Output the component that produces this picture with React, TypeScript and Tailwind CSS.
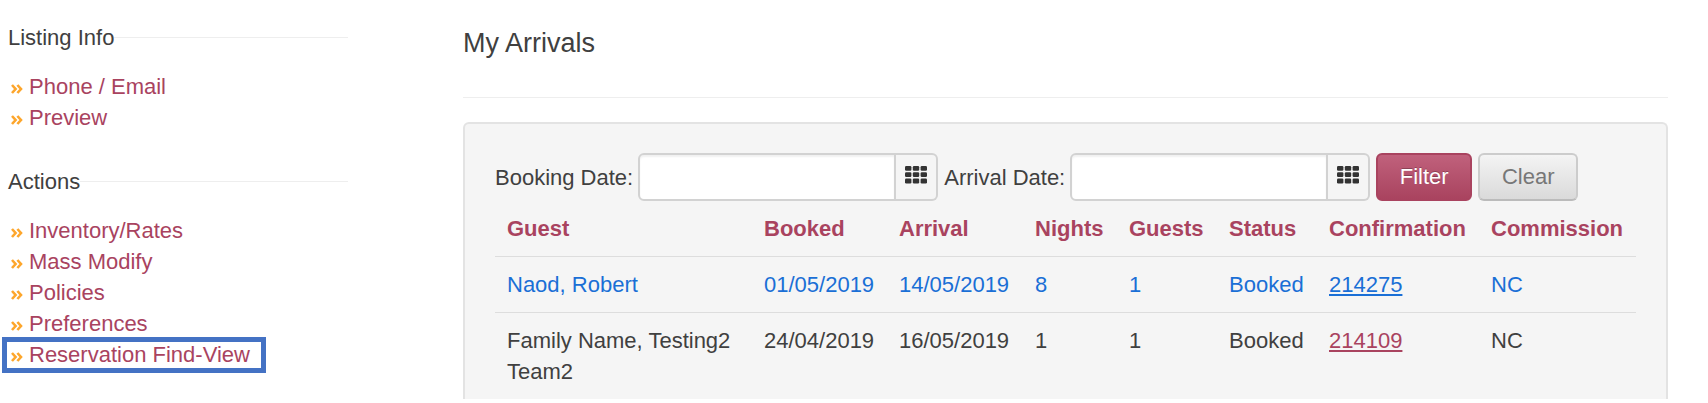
import React from "react";

const listingLinks = ["Phone / Email", "Preview"];
const actionLinks = ["Inventory/Rates", "Mass Modify", "Policies", "Preferences", "Reservation Find-View"];

type Arrival = {
  guest: string;
  booked: string;
  arrival: string;
  nights: number;
  guests: number;
  status: string;
  confirmation: string;
  commission: string;
  isNew: boolean;
};

const arrivals: Arrival[] = [
  { guest: "Naod, Robert", booked: "01/05/2019", arrival: "14/05/2019", nights: 8, guests: 1, status: "Booked", confirmation: "214275", commission: "NC", isNew: true },
  { guest: "Family Name, Testing2 Team2", booked: "24/04/2019", arrival: "16/05/2019", nights: 1, guests: 1, status: "Booked", confirmation: "214109", commission: "NC", isNew: false },
];

const columns = ["Guest", "Booked", "Arrival", "Nights", "Guests", "Status", "Confirmation", "Commission"];

function Bullet() {
  return (
    <svg className="mt-1 h-2.5 w-3 shrink-0" viewBox="0 0 12 10" fill="none" stroke="#fda62c" strokeWidth="2.6" aria-hidden="true">
      <path d="M1 1 L4.6 5 L1 9" />
      <path d="M6.4 1 L10 5 L6.4 9" />
    </svg>
  );
}

function GridIcon() {
  return (
    <svg className="h-[18px] w-[22px]" viewBox="0 0 22 18" fill="#333333" aria-hidden="true">
      {[0, 6.2, 12.6].map((y) =>
        [0, 7.8, 15.6].map((x) => <rect key={`${x}-${y}`} x={x} y={y} width="6.4" height="4.8" rx="1.2" />)
      )}
    </svg>
  );
}

function NavSection({ title, links, marked }: { title: string; links: string[]; marked?: string }) {
  return (
    <section>
      <h2 className="flex items-center">
        {title}
        <span className="h-px flex-1 bg-[#eeeeee]" />
      </h2>
      <ul className="mt-[18px]">
        {links.map((label) => (
          <li key={label} className="relative w-fit">
            <a href="#" className="flex items-center gap-1.5 pl-[3px] text-[#a9435f]">
              <Bullet />
              {label}
            </a>
            {label === marked && (
              <span className="pointer-events-none absolute -top-0.5 -right-4 -bottom-[3px] -left-1.5 border-[5px] border-[#4472c4]" />
            )}
          </li>
        ))}
      </ul>
    </section>
  );
}

function DateField({ id, label }: { id: string; label: string }) {
  return (
    <div className="flex items-center gap-[5px]">
      <label htmlFor={id} className="whitespace-nowrap">{label}</label>
      <div className="flex h-12">
        <input
          id={id}
          type="text"
          className="w-[258px] rounded-l-md border-2 border-[#d2d2d2] bg-white px-2 shadow-[inset_0_2px_2px_rgba(0,0,0,0.06)] outline-none"
        />
        <button
          type="button"
          aria-label={`Choose ${label}`}
          className="flex w-[42px] items-center justify-center rounded-r-md border-2 border-l-0 border-[#d2d2d2] bg-[#f5f5f5] pb-1"
        >
          <GridIcon />
        </button>
      </div>
    </div>
  );
}

export default function App() {
  return (
    <div className="flex bg-white font-['Liberation_Sans',Arial,sans-serif] text-[22px] leading-[31px] text-[#404040]">
      <nav className="flex w-[348px] shrink-0 flex-col gap-[33px] pt-[22px] pl-2">
        <NavSection title="Listing Info" links={listingLinks} />
        <NavSection title="Actions" links={actionLinks} marked="Reservation Find-View" />
      </nav>
      <main className="mr-10 ml-[115px] min-w-0 flex-1 pt-7">
        <h1 className="border-b border-[#eeeeee] pb-[38px] text-[27px]">My Arrivals</h1>
        <div className="mt-6 rounded-t-md border-2 border-b-0 border-[#e3e3e3] bg-[#f5f5f5] px-[30px] pt-[29px]">
          <form className="flex items-center gap-1.5" onSubmit={(e) => e.preventDefault()}>
            <DateField id="booking-date" label="Booking Date:" />
            <DateField id="arrival-date" label="Arrival Date:" />
            <button
              type="submit"
              className="h-12 w-24 rounded-md border-2 border-[#a9435f] bg-linear-to-b from-[#c0617c] to-[#a9435f] pb-0.5 text-white [text-shadow:0_-1px_0_rgba(0,0,0,0.25)]"
            >
              Filter
            </button>
            <button
              type="reset"
              className="h-12 w-[100px] rounded-md border-2 border-[#cccccc] border-b-[#bbbbbb] bg-linear-to-b from-[#f4f4f4] to-[#dadada] pb-0.5 text-[#777777]"
            >
              Clear
            </button>
          </form>
          <table className="w-full table-fixed text-left">
            <colgroup>
              <col />
              <col className="w-[135px]" />
              <col className="w-[136px]" />
              <col className="w-[94px]" />
              <col className="w-[100px]" />
              <col className="w-[100px]" />
              <col className="w-[162px]" />
              <col className="w-[157px]" />
            </colgroup>
            <thead>
              <tr>
                {columns.map((name) => (
                  <th key={name} scope="col" className="py-3 pl-3 font-bold text-[#a9435f]">{name}</th>
                ))}
              </tr>
            </thead>
            <tbody>
              {arrivals.map((row) => (
                <tr key={row.confirmation} className={row.isNew ? "border-t border-[#dddddd] align-top text-[#1a6fd6]" : "border-t border-[#dddddd] align-top"}>
                  <td className="py-3 pl-3">{row.guest}</td>
                  <td className="py-3 pl-3">{row.booked}</td>
                  <td className="py-3 pl-3">{row.arrival}</td>
                  <td className="py-3 pl-3">{row.nights}</td>
                  <td className="py-3 pl-3">{row.guests}</td>
                  <td className="py-3 pl-3">{row.status}</td>
                  <td className="py-3 pl-3">
                    <a href="#" className={row.isNew ? "underline" : "text-[#a9435f] underline"}>{row.confirmation}</a>
                  </td>
                  <td className="py-3 pl-3">{row.commission}</td>
                </tr>
              ))}
            </tbody>
          </table>
        </div>
      </main>
    </div>
  );
}
